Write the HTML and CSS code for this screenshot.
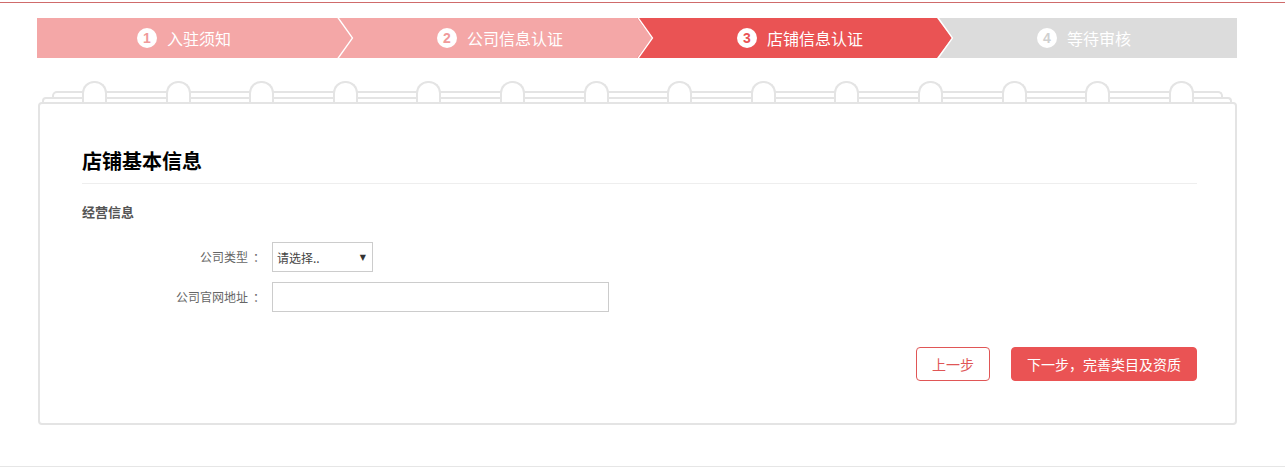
FILE: index.html
```html
<!DOCTYPE html>
<html lang="zh-CN">
<head>
<meta charset="utf-8">
<title>店铺信息认证</title>
<link rel="stylesheet" href="styles.css">
</head>
<body>
<div class="topline"></div>
<div class="wrap">
  <ol class="steps">
    <li class="step done"><span class="num">1</span><span class="step-text">入驻须知</span>
      <svg class="arrow" width="17" height="40" viewBox="0 0 17 40"><polygon points="0,0 15,20 0,40" class="arrow-fill"/><polyline points="0.5,-1 15.5,20 0.5,41" fill="none" stroke="#fff" stroke-width="1.3"/></svg></li>
    <li class="step done"><span class="num">2</span><span class="step-text">公司信息认证</span>
      <svg class="arrow" width="17" height="40" viewBox="0 0 17 40"><polygon points="0,0 15,20 0,40" class="arrow-fill"/><polyline points="0.5,-1 15.5,20 0.5,41" fill="none" stroke="#fff" stroke-width="1.3"/></svg></li>
    <li class="step current"><span class="num">3</span><span class="step-text">店铺信息认证</span>
      <svg class="arrow" width="17" height="40" viewBox="0 0 17 40"><polygon points="0,0 15,20 0,40" class="arrow-fill"/><polyline points="0.5,-1 15.5,20 0.5,41" fill="none" stroke="#fff" stroke-width="1.3"/></svg></li>
    <li class="step pending"><span class="num">4</span><span class="step-text">等待审核</span></li>
  </ol>

  <div class="binder">
    <div class="sheet sheet-back"></div>
    <div class="sheet sheet-mid"></div>
    <div class="rings">
      <span class="ring"></span><span class="ring"></span><span class="ring"></span><span class="ring"></span>
      <span class="ring"></span><span class="ring"></span><span class="ring"></span><span class="ring"></span>
      <span class="ring"></span><span class="ring"></span><span class="ring"></span><span class="ring"></span>
      <span class="ring"></span><span class="ring"></span>
    </div>
  </div>

  <div class="card">
    <h2 class="card-title">店铺基本信息</h2>
    <h3 class="section-title">经营信息</h3>
    <div class="form-row">
      <label class="label">公司类型<span class="colon">：</span></label>
      <div class="select"><span class="select-text">请选择..</span><span class="caret">▼</span></div>
    </div>
    <div class="form-row form-row-2">
      <label class="label">公司官网地址<span class="colon">：</span></label>
      <div class="input"></div>
    </div>
    <div class="actions">
      <button class="btn btn-outline">上一步</button>
      <button class="btn btn-primary">下一步，完善类目及资质</button>
    </div>
  </div>
</div>
<div class="footer-line"></div>
</body>
</html>
```

FILE: styles.css
```css
* { box-sizing: border-box; }
html, body { margin: 0; padding: 0; background: #fff; }
body {
  font-family: "Noto Sans CJK SC", "Microsoft YaHei", "Liberation Sans", sans-serif;
  color: #333;
}
.topline {
  height: 3px;
  border-bottom: 1px solid #cf6b6b;
}
.wrap {
  width: 1200px;
  margin-left: 37px;
  padding-top: 15px;
}

/* steps */
.steps {
  display: flex;
  list-style: none;
  margin: 0;
  padding: 0;
  height: 40px;
}
.step {
  position: relative;
  flex: 0 0 300px;
  display: flex;
  align-items: center;
  padding-left: 100px;
  height: 40px;
  color: #fff;
  font-size: 16px;
  line-height: 20px;
}
.step.done { background: #f4a7a7; }
.step.current { background: #ea5354; }
.step.pending { background: #dcdcdc; }
.num {
  width: 20px;
  height: 20px;
  border-radius: 50%;
  background: #fff;
  font-size: 14px;
  font-weight: 700;
  line-height: 20px;
  text-align: center;
  margin-right: 10px;
  font-family: "Liberation Sans", sans-serif;
}
.done .num { color: #f09a9a; }
.current .num { color: #ea5354; }
.pending .num { color: #d0d0d0; }
.step-text { white-space: nowrap; }
.arrow {
  position: absolute;
  left: 100%;
  top: 0;
  z-index: 2;
  overflow: visible;
}
.done .arrow-fill { fill: #f4a7a7; }
.current .arrow-fill { fill: #ea5354; }

/* binder */
.binder {
  position: relative;
  margin-top: 23px;
  height: 21px;
}
.sheet {
  position: absolute;
  background: #fff;
  border: 2px solid #e4e4e4;
  border-bottom: none;
}
.sheet-back {
  top: 10px;
  left: 15px;
  right: 14px;
  height: 11px;
  border-radius: 5px 5px 0 0;
}
.sheet-mid {
  top: 16px;
  left: 5px;
  right: 5px;
  height: 5px;
  border-radius: 4px 4px 0 0;
}
.rings {
  position: relative;
  z-index: 1;
  display: flex;
  gap: 58.6px;
  padding-left: 45px;
  height: 21px;
}
.ring {
  flex: 0 0 25px;
  height: 21px;
  background: #fff;
  border: 2px solid #e4e4e4;
  border-bottom: none;
  border-radius: 12px 12px 0 0;
}

/* card */
.card {
  margin-left: 1px;
  width: 1199px;
  border: 2px solid #e4e4e4;
  border-radius: 4px;
  padding: 43px 38px 42px 42px;
  background: #fff;
}
.card-title {
  margin: 0;
  font-size: 20px;
  line-height: 28px;
  font-weight: 700;
  color: #000;
  padding-bottom: 8px;
  border-bottom: 1px solid #eeeeee;
}
.section-title {
  margin: 18px 0 0;
  font-size: 13px;
  line-height: 20px;
  font-weight: 700;
  color: #555;
}
.form-row {
  display: flex;
  align-items: center;
  gap: 10px;
  margin-top: 20px;
  height: 30px;
}
.form-row-2 { margin-top: 10px; }
.label {
  width: 180px;
  text-align: right;
  font-size: 12px;
  color: #666;
  line-height: 30px;
}
.colon {
  display: inline-block;
  width: 12px;
  margin-left: 2px;
  text-align: center;
  text-indent: 3px;
}
.select {
  width: 101px;
  height: 30px;
  border: 1px solid #cccccc;
  display: flex;
  align-items: center;
  justify-content: space-between;
  padding: 0 6px 0 4px;
  font-size: 12px;
  color: #444;
}
.caret {
  font-size: 8px;
  color: #333;
  font-family: "DejaVu Sans", sans-serif;
}
.input {
  width: 337px;
  height: 30px;
  border: 1px solid #cccccc;
}
.actions {
  display: flex;
  justify-content: flex-end;
  gap: 21px;
  margin-top: 35px;
}
.btn {
  height: 34px;
  padding: 0 15px;
  font-size: 14px;
  line-height: 32px;
  border-radius: 4px;
  font-family: inherit;
  cursor: pointer;
}
.btn-outline {
  background: #fff;
  border: 1px solid #e05656;
  color: #e05656;
}
.btn-primary {
  background: #ea5354;
  border: 1px solid #ea5354;
  color: #fff;
}
.footer-line {
  margin-top: 41px;
  border-top: 1px solid #e6e6e6;
}
```
